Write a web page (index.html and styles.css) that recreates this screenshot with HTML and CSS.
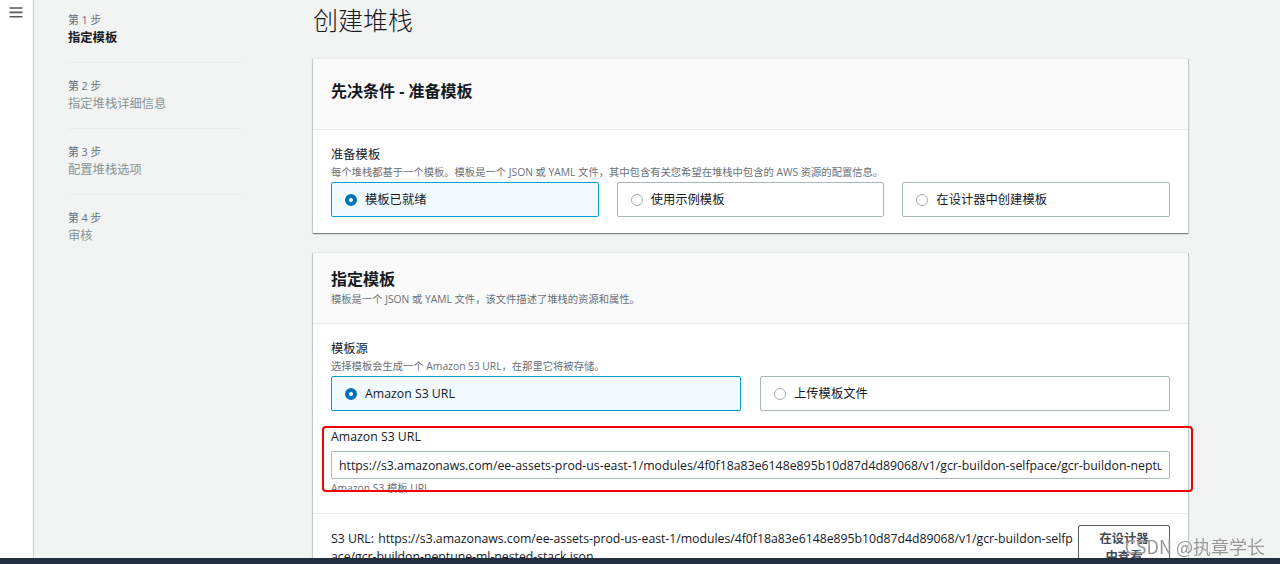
FILE: index.html
```html
<!DOCTYPE html>
<html lang="zh-CN">
<head>
<meta charset="utf-8">
<title>创建堆栈</title>
<link rel="stylesheet" href="styles.css">
</head>
<body>
<div class="app">
  <aside class="rail">
    <button class="menu-btn" aria-label="菜单">
      <svg width="14" height="11" viewBox="0 0 14 11"><path d="M0.5 1h13M0.5 5.4h13M0.5 9.8h13" stroke="#545b64" stroke-width="1.6" fill="none"/></svg>
    </button>
  </aside>
  <nav class="steps">
    <div class="step active"><div class="step-num">第 1 步</div><div class="step-title">指定模板</div></div>
    <div class="step"><div class="step-num">第 2 步</div><div class="step-title">指定堆栈详细信息</div></div>
    <div class="step"><div class="step-num">第 3 步</div><div class="step-title">配置堆栈选项</div></div>
    <div class="step"><div class="step-num">第 4 步</div><div class="step-title">审核</div></div>
  </nav>
  <main class="main">
    <h1 class="page-title">创建堆栈</h1>

    <section class="card">
      <header class="card-head card-head-solo">
        <h2 class="card-title">先决条件 - 准备模板</h2>
      </header>
      <div class="card-body">
        <div class="field-label">准备模板</div>
        <div class="field-desc">每个堆栈都基于一个模板。模板是一个 JSON 或 YAML 文件，其中包含有关您希望在堆栈中包含的 AWS 资源的配置信息。</div>
        <div class="tiles tiles-3">
          <div class="tile selected"><span class="radio on"></span><span>模板已就绪</span></div>
          <div class="tile"><span class="radio"></span><span>使用示例模板</span></div>
          <div class="tile"><span class="radio"></span><span>在设计器中创建模板</span></div>
        </div>
      </div>
    </section>

    <section class="card">
      <header class="card-head">
        <h2 class="card-title">指定模板</h2>
        <div class="card-desc">模板是一个 JSON 或 YAML 文件，该文件描述了堆栈的资源和属性。</div>
      </header>
      <div class="card-body card-body-s3">
        <div class="field-label">模板源</div>
        <div class="field-desc">选择模板会生成一个 Amazon S3 URL，在那里它将被存储。</div>
        <div class="tiles tiles-2">
          <div class="tile selected"><span class="radio on"></span><span>Amazon S3 URL</span></div>
          <div class="tile"><span class="radio"></span><span>上传模板文件</span></div>
        </div>
        <div class="s3-field">
          <div class="s3-label">Amazon S3 URL</div>
          <input class="s3-input" type="text" readonly value="https://s3.amazonaws.com/ee-assets-prod-us-east-1/modules/4f0f18a83e6148e895b10d87d4d89068/v1/gcr-buildon-selfpace/gcr-buildon-neptune-ml-nested-stack.json">
          <div class="s3-hint">Amazon S3 模板 URL</div>
          <div class="annot"></div>
        </div>
      </div>
      <div class="card-foot">
        <div class="s3-url"><span class="s3-url-key">S3 URL:</span> https://s3.amazonaws.com/ee-assets-prod-us-east-1/modules/4f0f18a83e6148e895b10d87d4d89068/v1/gcr-buildon-selfpace/gcr-buildon-neptune-ml-nested-stack.json</div>
        <button class="btn">在设计器中查看</button>
      </div>
    </section>
  </main>
</div>
<div class="bottom-bar"></div>
<div class="watermark">CSDN @执章学长</div>
</body>
</html>
```
FILE: styles.css
```css
* { box-sizing: border-box; }
html, body { margin: 0; height: 100%; }
body {
  background: #f2f3f3;
  font-family: "Open Sans", "Noto Sans CJK SC", sans-serif;
  font-size: 12.3px;
  line-height: 18px;
  color: #16191f;
  overflow: hidden;
}
.app {
  display: flex;
  align-items: stretch;
  height: 564px;
}
.rail {
  width: 34px;
  flex: none;
  background: #fff;
  border-right: 1px solid #c9cfd0;
  padding: 7px 0 0 9px;
}
.menu-btn {
  display: block;
  border: 0;
  background: none;
  padding: 0;
  width: 14px;
  height: 11px;
}
.menu-btn svg { display: block; }

.steps {
  width: 174px;
  flex: none;
  margin-left: 34px;
  padding-top: 12px;
}
.step {
  padding: 15px 0 14px;
  border-bottom: 1px solid #eaeded;
}
.step:first-child { padding-top: 0; }
.step:last-child { border-bottom: 0; }
.step-num {
  font-size: 10.8px;
  line-height: 16px;
  color: #687078;
}
.step-title {
  font-size: 12.3px;
  line-height: 20px;
  color: #879596;
}
.step.active .step-title {
  color: #16191f;
  font-weight: 700;
}

.main {
  width: 875px;
  flex: none;
  margin-left: 71px;
  padding-top: 5px;
}
.page-title {
  margin: 0 0 23px;
  font-size: 25px;
  line-height: 30px;
  font-weight: 300;
  color: #16191f;
}

.card {
  background: #fff;
  border-top: 1px solid #eaeded;
  box-shadow: 0 1px 1px 0 rgba(0, 28, 36, .3), 1px 1px 1px 0 rgba(0, 28, 36, .15), -1px 1px 1px 0 rgba(0, 28, 36, .15);
  margin-bottom: 19px;
}
.card-head {
  background: #fafafa;
  border-bottom: 1px solid #eaeded;
  padding: 16px 18px;
}
.card-head-solo { padding: 22px 18px 28px; }
.card-title {
  margin: 0;
  font-size: 16px;
  line-height: 20px;
  font-weight: 700;
  color: #16191f;
}
.card-desc {
  margin-top: 2px;
  font-size: 10.3px;
  line-height: 16px;
  color: #687078;
}
.card-body { padding: 16px 18px 16px; }
.card-body-s3 { padding-bottom: 17px; }

.field-label { line-height: 18px; }
.field-desc {
  font-size: 10.3px;
  line-height: 16px;
  color: #687078;
}
.tiles {
  display: grid;
  margin-top: 2px;
}
.tiles-3 { grid-template-columns: repeat(3, 1fr); gap: 18px; }
.tiles-2 { grid-template-columns: 1fr 1fr; gap: 19px; }
.tile {
  display: flex;
  align-items: center;
  gap: 8px;
  height: 35px;
  padding: 0 13px;
  border: 1px solid #aab7b8;
  border-radius: 2px;
  background: #fff;
}
.tile.selected {
  background: #f1faff;
  border-color: #00a1c9;
}
.radio {
  flex: none;
  width: 12px;
  height: 12px;
  border-radius: 50%;
  border: 1px solid #9fadae;
  background: #fff;
}
.radio.on {
  border: 4px solid #0073bb;
}

.s3-field {
  position: relative;
  margin-top: 17px;
}
.s3-label { line-height: 18px; }
.s3-input {
  display: block;
  width: 100%;
  height: 28px;
  margin: 5px 0 0;
  padding: 0 7px;
  border: 1px solid #aab7b8;
  border-radius: 2px;
  background: #fff;
  font: inherit;
  color: #16191f;
  outline: none;
}
.s3-hint {
  margin-top: 1px;
  font-size: 10.3px;
  line-height: 16px;
  color: #687078;
}
.annot {
  position: absolute;
  top: -2px;
  left: -9px;
  right: -23px;
  bottom: 4px;
  border: 2px solid #f40000;
  border-radius: 4px;
  pointer-events: none;
}

.card-foot {
  display: flex;
  align-items: flex-start;
  padding: 11px 18px 12px;
  border-top: 1px solid #eaeded;
}
.s3-url {
  flex: 1;
  min-width: 0;
  padding-top: 5px;
  letter-spacing: -0.03px;
  word-break: break-all;
}
.s3-url-key { margin-right: 1px; }
.btn {
  flex: none;
  width: 92px;
  padding: 4px 18px 6px;
  border: 1px solid #545b64;
  border-radius: 2px;
  background: #fff;
  font: inherit;
  font-weight: 700;
  line-height: 18px;
  color: #444c55;
  text-align: center;
}

.bottom-bar {
  position: fixed;
  left: 0;
  right: 0;
  bottom: 0;
  height: 6px;
  background: #232f3e;
}
.watermark {
  position: fixed;
  z-index: 10;
  right: 15px;
  bottom: 8px;
  font-family: "Noto Sans CJK SC", sans-serif;
  font-size: 18px;
  line-height: 20px;
  color: rgba(125, 125, 125, .8);
  text-shadow: 0 0 1px #fff;
}
```
